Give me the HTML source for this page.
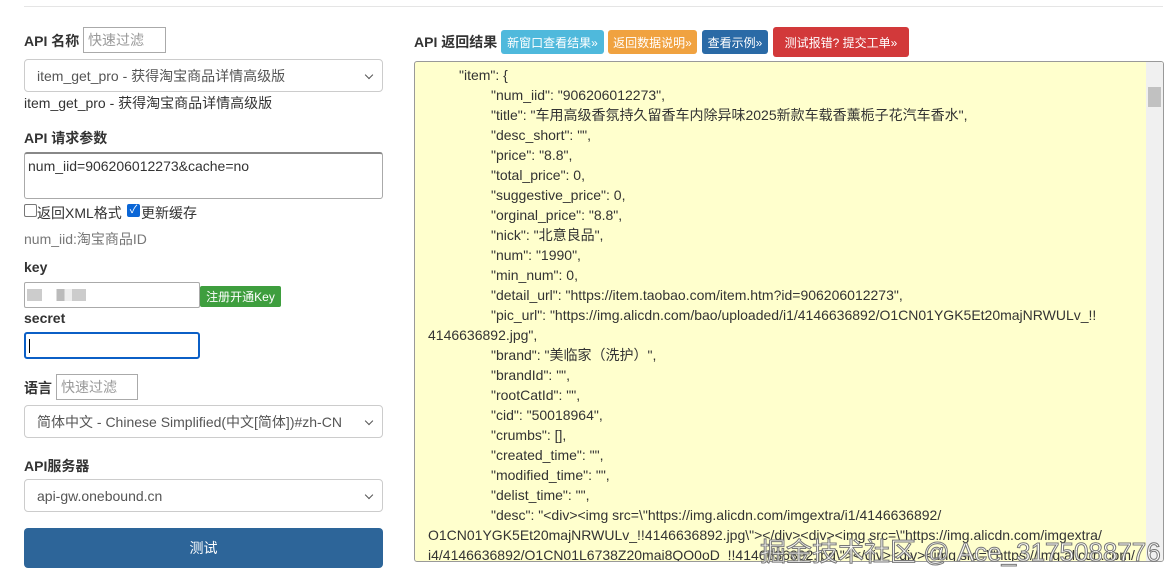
<!DOCTYPE html>
<html><head><meta charset="utf-8"><style>
*{box-sizing:border-box;margin:0;padding:0}
body{width:1170px;height:580px;overflow:hidden;background:#fff;font-family:"Liberation Sans","Noto Sans CJK SC",sans-serif;font-size:14px;color:#333;position:relative}
.a{position:absolute}
.b{font-weight:bold}
.inp{position:absolute;border:1px solid #aaa;background:#fff;font-size:14px;color:#999;padding-left:4px;display:flex;align-items:center}
.sel{position:absolute;left:24px;width:359px;height:33px;border:1px solid #ccc;border-radius:4px;background:#fff;padding-left:12px;display:flex;align-items:center;color:#555;font-size:14px}
.sel:after{content:"";position:absolute;right:10px;top:12px;width:5px;height:5px;border-right:1.5px solid #555;border-bottom:1.5px solid #555;transform:rotate(45deg)}
.btn{position:absolute;color:#fff;font-size:12px;display:flex;align-items:center;justify-content:center;border-radius:3px}
.res{position:absolute;left:414px;top:61px;width:750px;height:501px;background:#ffffcd;border:1px solid #999;border-radius:3px;overflow:hidden;font-size:14px;color:#333;line-height:20px}
.res div{white-space:nowrap}
.l1{padding-left:44px}.l2{padding-left:76px}.w{padding-left:13px}
</style></head><body>
<div class="a" style="left:24px;top:6px;width:1139px;height:1px;background:#e5e5e5"></div>
<div class="a b" style="left:24px;top:31px">API 名称</div>
<div class="inp" style="left:83px;top:27px;width:83px;height:26px">快速过滤</div>
<div class="sel" style="top:59px">item_get_pro - 获得淘宝商品详情高级版</div>
<div class="a" style="left:24px;top:93px">item_get_pro - 获得淘宝商品详情高级版</div>
<div class="a b" style="left:24px;top:128px">API 请求参数</div>
<div class="a" style="left:24px;top:152px;width:359px;height:47px;border:1px solid #aaa;border-top:2px solid #888;border-radius:3px;padding:4px 3px;color:#333">num_iid=906206012273&amp;cache=no</div>
<div class="a" style="left:24px;top:204px;width:13px;height:13px;border:1px solid #777;border-radius:2px"></div>
<div class="a" style="left:37px;top:203px">返回XML格式</div>
<div class="a" style="left:127px;top:204px;width:13px;height:13px;background:#0b66d6;border-radius:2px;color:#fff;font-size:11px;line-height:13px;text-align:center">✓</div>
<div class="a" style="left:141px;top:203px">更新缓存</div>
<div class="a" style="left:24px;top:229px;color:#777">num_iid:淘宝商品ID</div>
<div class="a b" style="left:24px;top:259px">key</div>
<div class="a" style="left:24px;top:282px;width:176px;height:26px;border:1px solid #aaa;border-radius:2px"></div>
<div class="a" style="left:27px;top:289px;width:82px;height:12px;background:linear-gradient(90deg,#ccc 0 18%,#fff 18% 36%,#bbb 36% 46%,#eee 46% 55%,#ccc 55% 72%,#fff 72%)"></div>
<div class="btn" style="left:200px;top:286px;width:81px;height:21px;background:#3e9e3e;border-radius:2px">注册开通Key</div>
<div class="a b" style="left:24px;top:310px">secret</div>
<div class="a" style="left:24px;top:332px;width:176px;height:27px;border:2px solid #0b5fc6;border-radius:3px"></div>
<div class="a" style="left:29px;top:339px;width:1px;height:14px;background:#000"></div>
<div class="a b" style="left:24px;top:378px">语言</div>
<div class="inp" style="left:56px;top:374px;width:82px;height:26px">快速过滤</div>
<div class="sel" style="top:405px">简体中文 - Chinese Simplified(中文[简体])#zh-CN</div>
<div class="a b" style="left:24px;top:456px">API服务器</div>
<div class="sel" style="top:479px">api-gw.onebound.cn</div>
<div class="btn" style="left:24px;top:528px;width:359px;height:40px;background:#2d6599;border-radius:4px;font-size:14px">测试</div>

<div class="a b" style="left:414px;top:32px">API 返回结果</div>
<div class="btn" style="left:501px;top:30px;width:103px;height:24px;background:#4fb9dc">新窗口查看结果»</div>
<div class="btn" style="left:608px;top:30px;width:89px;height:24px;background:#f0a240">返回数据说明»</div>
<div class="btn" style="left:702px;top:30px;width:66px;height:24px;background:#2a6aa6">查看示例»</div>
<div class="btn" style="left:773px;top:27px;width:136px;height:30px;background:#d2393a">测试报错? 提交工单»</div>

<div class="res"><div style="padding-top:3px">
<div class="l1">"item": {</div>
<div class="l2">"num_iid": "906206012273",</div>
<div class="l2">"title": "车用高级香氛持久留香车内除异味2025新款车载香薰栀子花汽车香水",</div>
<div class="l2">"desc_short": "",</div>
<div class="l2">"price": "8.8",</div>
<div class="l2">"total_price": 0,</div>
<div class="l2">"suggestive_price": 0,</div>
<div class="l2">"orginal_price": "8.8",</div>
<div class="l2">"nick": "北意良品",</div>
<div class="l2">"num": "1990",</div>
<div class="l2">"min_num": 0,</div>
<div class="l2">"detail_url": "https://item.taobao.com/item.htm?id=906206012273",</div>
<div class="l2">"pic_url": "https://img.alicdn.com/bao/uploaded/i1/4146636892/O1CN01YGK5Et20majNRWULv_!!</div>
<div class="w">4146636892.jpg",</div>
<div class="l2">"brand": "美临家（洗护）",</div>
<div class="l2">"brandId": "",</div>
<div class="l2">"rootCatId": "",</div>
<div class="l2">"cid": "50018964",</div>
<div class="l2">"crumbs": [],</div>
<div class="l2">"created_time": "",</div>
<div class="l2">"modified_time": "",</div>
<div class="l2">"delist_time": "",</div>
<div class="l2">"desc": "&lt;div&gt;&lt;img src=\"https://img.alicdn.com/imgextra/i1/4146636892/</div>
<div class="w">O1CN01YGK5Et20majNRWULv_!!4146636892.jpg\"&gt;&lt;/div&gt;&lt;div&gt;&lt;img src=\"https://img.alicdn.com/imgextra/</div>
<div class="w">i4/4146636892/O1CN01L6738Z20mai8QO0oD_!!4146636892.jpg\"&gt;&lt;/div&gt;&lt;div&gt;&lt;img src=\"https://img.alicdn.com/</div>
</div>
<div class="a" style="right:0;top:0;width:17px;height:499px;background:#f0f0f0"></div>
<div class="a" style="right:2px;top:25px;width:13px;height:20px;background:#c1c1c1"></div>
</div>
<div class="a" style="left:760px;top:532px;font-size:26px;color:rgba(255,255,255,.85);-webkit-text-stroke:1px #777;white-space:nowrap">掘金技术社区 @ Ace_3175088776</div>
</body></html>
